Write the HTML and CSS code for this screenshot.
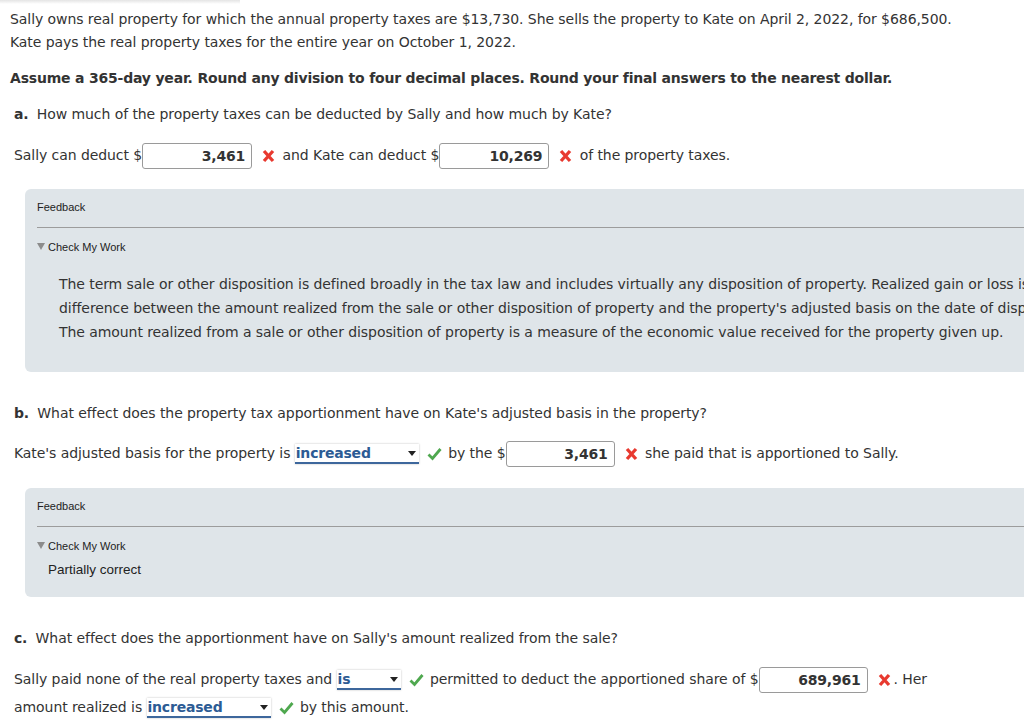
FILE: index.html
```html
<!DOCTYPE html>
<html>
<head>
<meta charset="utf-8">
<link rel="stylesheet" href="styles.css">
</head>
<body>
<div class="page">
  <p class="intro">Sally owns real property for which the annual property taxes are $13,730. She sells the property to Kate on April 2, 2022, for $686,500.<br>Kate pays the real property taxes for the entire year on October 1, 2022.</p>
  <p class="instr">Assume a 365-day year. Round any division to four decimal places. Round your final answers to the nearest dollar.</p>

  <section class="part part-a">
    <p class="q"><b class="lbl">a.</b> How much of the property taxes can be deducted by Sally and how much by Kate?</p>
    <p class="row">Sally can deduct $<span class="inp w110">3,461</span><span class="ico x"><svg width="13" height="14" viewBox="0 0 13 14"><path d="M2 2L11 12M11 2L2 12" stroke="#e8392f" stroke-width="3.3"/></svg></span> and Kate can deduct $<span class="inp w110">10,269</span><span class="ico x"><svg width="13" height="14" viewBox="0 0 13 14"><path d="M2 2L11 12M11 2L2 12" stroke="#e8392f" stroke-width="3.3"/></svg></span> of the property taxes.</p>
    <div class="fb fb-long">
      <div class="fb-title">Feedback</div>
      <div class="fb-rule"></div>
      <div class="cmw"><svg class="tri" width="8" height="7" viewBox="0 0 8 7"><path d="M0 0H8L4 7Z" fill="#8c8c8c"/></svg>Check My Work</div>
      <p class="fb-text">The term sale or other disposition is defined broadly in the tax law and includes virtually any disposition of property. Realized gain or loss is the<br>difference between the amount realized from the sale or other disposition of property and the property's adjusted basis on the date of disposition.<br>The amount realized from a sale or other disposition of property is a measure of the economic value received for the property given up.</p>
    </div>
  </section>

  <section class="part part-b">
    <p class="q"><b class="lbl">b.</b> What effect does the property tax apportionment have on Kate's adjusted basis in the property?</p>
    <p class="row">Kate's adjusted basis for the property is <span class="sel w124"><span class="sel-text">increased</span><svg width="8" height="5" viewBox="0 0 8 5"><path d="M0 0H8L4 5Z" fill="#222"/></svg></span><span class="ico ok"><svg width="15" height="14" viewBox="0 0 15 14"><path d="M1.5 7.5L5.5 11.5L13.5 2" fill="none" stroke="#4fa84f" stroke-width="2.8"/></svg></span> by the $<span class="inp w109">3,461</span><span class="ico x"><svg width="13" height="14" viewBox="0 0 13 14"><path d="M2 2L11 12M11 2L2 12" stroke="#e8392f" stroke-width="3.3"/></svg></span> she paid that is apportioned to Sally.</p>
    <div class="fb fb-short">
      <div class="fb-title">Feedback</div>
      <div class="fb-rule"></div>
      <div class="cmw"><svg class="tri" width="8" height="7" viewBox="0 0 8 7"><path d="M0 0H8L4 7Z" fill="#8c8c8c"/></svg>Check My Work</div>
      <p class="fb-status">Partially correct</p>
    </div>
  </section>

  <section class="part part-c">
    <p class="q"><b class="lbl">c.</b> What effect does the apportionment have on Sally's amount realized from the sale?</p>
    <p class="row">Sally paid none of the real property taxes and <span class="sel w64"><span class="sel-text">is</span><svg width="8" height="5" viewBox="0 0 8 5"><path d="M0 0H8L4 5Z" fill="#222"/></svg></span><span class="ico ok"><svg width="15" height="14" viewBox="0 0 15 14"><path d="M1.5 7.5L5.5 11.5L13.5 2" fill="none" stroke="#4fa84f" stroke-width="2.8"/></svg></span> permitted to deduct the apportioned share of $<span class="inp w109">689,961</span><span class="ico x"><svg width="13" height="14" viewBox="0 0 13 14"><path d="M2 2L11 12M11 2L2 12" stroke="#e8392f" stroke-width="3.3"/></svg></span>. Her<br>amount realized is <span class="sel w124"><span class="sel-text">increased</span><svg width="8" height="5" viewBox="0 0 8 5"><path d="M0 0H8L4 5Z" fill="#222"/></svg></span><span class="ico ok"><svg width="15" height="14" viewBox="0 0 15 14"><path d="M1.5 7.5L5.5 11.5L13.5 2" fill="none" stroke="#4fa84f" stroke-width="2.8"/></svg></span> by this amount.</p>
  </section>
</div>
</body>
</html>
```
FILE: styles.css
```css
html, body {
  margin: 0;
  padding: 0;
  overflow: hidden;
  background: #fff;
}
body {
  font-family: "DejaVu Sans", Verdana, sans-serif;
  font-size: 14px;
  letter-spacing: -0.07px;
  color: #333;
  width: 1024px;
  height: 724px;
  position: relative;
}
body::before {
  content: "";
  position: absolute;
  left: 0;
  top: 0;
  width: 240px;
  height: 4px;
  background: linear-gradient(#e4e4e4, #ffffff);
}
.page {
  padding: 8px 0 0 10px;
  width: 1200px;
}
p {
  margin: 0;
}
b {
  letter-spacing: -0.2px;
}
.intro {
  line-height: 23px;
}
.instr {
  font-weight: bold;
  letter-spacing: -0.2px;
  line-height: 23px;
  margin-top: 13px;
}
.part {
  padding-left: 4px;
}
.part-a {
  margin-top: 13px;
}
.part-b {
  margin-top: 30px;
}
.part-c {
  margin-top: 30px;
}
.q {
  line-height: 23px;
}
.lbl {
  margin-right: 4px;
}
.row {
  line-height: 28px;
  margin-top: 15px;
  white-space: nowrap;
}
.part-b .row {
  margin-top: 14px;
}
.inp {
  display: inline-block;
  box-sizing: border-box;
  height: 26px;
  line-height: 24px;
  border: 1px solid #9a9a9a;
  border-radius: 3px;
  text-align: right;
  padding-right: 6px;
  font-weight: bold;
  letter-spacing: -0.2px;
  color: #333;
  vertical-align: middle;
  background: #fff;
}
.w110 { width: 110px; }
.w109 { width: 109px; }
.w124 { width: 124px; }
.w64 { width: 64px; }
.sel {
  display: inline-flex;
  align-items: center;
  justify-content: space-between;
  box-sizing: border-box;
  height: 20px;
  padding: 0 3px 0 1px;
  border-bottom: 2px solid #3d679c;
  background: #fff;
  box-shadow: 0 0 2px rgba(0, 0, 0, 0.25);
  vertical-align: middle;
}
.sel-text {
  font-weight: bold;
  letter-spacing: -0.2px;
  color: #2c5b94;
  line-height: 18px;
}
.ico {
  display: inline-block;
  vertical-align: middle;
  line-height: 0;
}
.ico.x {
  margin: 0 3px 0 10px;
}
.ico.ok {
  margin: 0 2px 0 8px;
}
.fb {
  margin: 20px 0 0 11px;
  background: #dfe5e9;
  border-radius: 6px 0 0 6px;
  padding: 12px 0 28px 12px;
  width: 1100px;
  font-family: "Liberation Sans", Arial, sans-serif;
  letter-spacing: 0;
  color: #222;
}
.part-b .fb {
  margin-top: 21px;
  padding-bottom: 18px;
}
.fb-title {
  font-size: 11px;
  line-height: 12px;
}
.fb-rule {
  margin-top: 14px;
  border-top: 1px solid #9c9c9c;
}
.cmw {
  margin-top: 12px;
  font-size: 11px;
  line-height: 14px;
  display: flex;
  align-items: center;
}
.tri {
  margin-right: 3px;
  margin-top: -2px;
}
.fb-text {
  margin: 18px 0 0 22px;
  font-family: "DejaVu Sans", Verdana, sans-serif;
  font-size: 14px;
  letter-spacing: -0.07px;
  line-height: 24px;
  color: #333;
  white-space: nowrap;
}
.fb-status {
  margin: 8px 0 0 11px;
  font-size: 13.5px;
  line-height: 18px;
}
```
